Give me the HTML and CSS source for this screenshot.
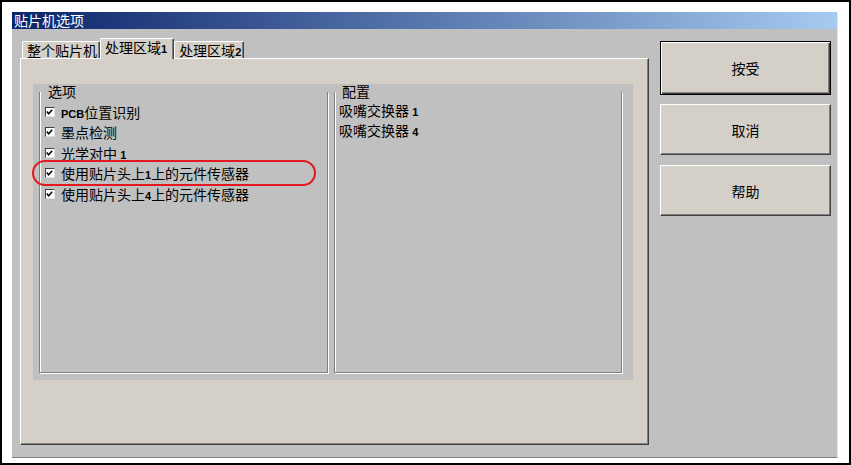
FILE: index.html
```html
<!DOCTYPE html>
<html lang="zh-CN">
<head>
    <meta charset="UTF-8">
    <title>贴片机选项</title>
    <link rel="stylesheet" href="styles.css">
</head>
<body>
    <div class="frame">
        <div class="dialog">
            <div class="titlebar">贴片机选项</div>
            <div class="dialog-body">
                <div class="sheet">
                    <div class="tabs">
                        <div class="tab">整个贴片机</div>
                        <div class="tab active">处理区域<span class="num">1</span></div>
                        <div class="tab">处理区域<span class="num">2</span></div>
                    </div>
                    <div class="page">
                        <div class="inner">
                            <div class="group options">
                                <div class="group-label">选项</div>
                                <div class="check-row">
                                    <span class="box"><svg width="10" height="10" viewBox="0 0 10 10"><polyline points="2,4.5 4,7 8,2.5" fill="none" stroke="#000" stroke-width="1.6"/></svg></span>
                                    <span><span class="num">PCB</span>位置识别</span>
                                </div>
                                <div class="check-row">
                                    <span class="box"><svg width="10" height="10" viewBox="0 0 10 10"><polyline points="2,4.5 4,7 8,2.5" fill="none" stroke="#000" stroke-width="1.6"/></svg></span>
                                    <span>墨点检测</span>
                                </div>
                                <div class="check-row">
                                    <span class="box"><svg width="10" height="10" viewBox="0 0 10 10"><polyline points="2,4.5 4,7 8,2.5" fill="none" stroke="#000" stroke-width="1.6"/></svg></span>
                                    <span>光学对中 <span class="num">1</span></span>
                                </div>
                                <div class="check-row marked">
                                    <span class="box"><svg width="10" height="10" viewBox="0 0 10 10"><polyline points="2,4.5 4,7 8,2.5" fill="none" stroke="#000" stroke-width="1.6"/></svg></span>
                                    <span>使用贴片头上<span class="num">1</span>上的元件传感器</span>
                                    <span class="highlight"></span>
                                </div>
                                <div class="check-row">
                                    <span class="box"><svg width="10" height="10" viewBox="0 0 10 10"><polyline points="2,4.5 4,7 8,2.5" fill="none" stroke="#000" stroke-width="1.6"/></svg></span>
                                    <span>使用贴片头上<span class="num">4</span>上的元件传感器</span>
                                </div>
                            </div>
                            <div class="group config">
                                <div class="group-label">配置</div>
                                <div class="text-row">吸嘴交换器 <span class="num">1</span></div>
                                <div class="text-row">吸嘴交换器 <span class="num">4</span></div>
                            </div>
                        </div>
                    </div>
                </div>
                <div class="buttons">
                    <button class="btn default">按受</button>
                    <button class="btn">取消</button>
                    <button class="btn">帮助</button>
                </div>
            </div>
        </div>
    </div>
</body>
</html>
```

FILE: styles.css
```css
body {
    margin: 0;
    font-family: "Noto Sans CJK SC", "Liberation Sans", sans-serif;
    font-size: 14px;
    color: #000;
}
.frame {
    width: 851px;
    height: 465px;
    box-sizing: border-box;
    border: 2px solid #000;
    background: #fff;
    padding: 10px 0 0 10px;
}
.dialog {
    width: 826px;
    height: 446px;
    box-sizing: border-box;
    background: #c0c0c0;
    border-right: 1px solid #e4e4e4;
    border-bottom: 1px solid #808080;
}
.titlebar {
    height: 17px;
    line-height: 17px;
    padding-left: 2px;
    color: #fff;
    background: linear-gradient(to right, #0a246a, #a6caf0);
}
.dialog-body {
    display: flex;
    padding: 9px 0 0 8px;
}
.num {
    font-family: "Liberation Sans", sans-serif;
    font-weight: bold;
    font-size: 11px;
}

/* tabs */
.sheet {
    width: 629px;
}
.tabs {
    display: flex;
    align-items: flex-end;
    height: 20px;
    padding-left: 2px;
    position: relative;
    z-index: 1;
}
.tab {
    height: 17px;
    line-height: 17px;
    box-sizing: border-box;
    padding: 0 2px 0 4px;
    background: #d4d0c8;
    border-top: 1px solid #fff;
    border-left: 1px solid #fff;
    border-right: 1px solid #404040;
    box-shadow: inset -1px 0 #808080;
    border-radius: 2px 2px 0 0;
    white-space: nowrap;
}
.tab.active {
    height: 21px;
    line-height: 17px;
    margin-bottom: -1px;
    padding: 0 6px 0 4px;
}
.page {
    height: 387px;
    box-sizing: border-box;
    background: #d4d0c8;
    border-top: 1px solid #fff;
    border-left: 1px solid #fff;
    border-right: 1px solid #404040;
    border-bottom: 1px solid #404040;
    box-shadow: inset -1px -1px #808080;
    padding: 25px 0 0 12px;
}
.inner {
    width: 600px;
    height: 296px;
    box-sizing: border-box;
    background: #c0c0c0;
    display: flex;
    gap: 6px;
    padding: 8px 0 0 6px;
}

/* group boxes */
.group {
    height: 281px;
    box-sizing: border-box;
    border: 1px solid #808080;
    border-top: none;
    box-shadow: 1px 1px 0 #fff, inset 1px 0 0 #fff;
}
.options {
    width: 289px;
    padding-left: 5px;
}
.config {
    width: 288px;
    padding-left: 4px;
}
.group-label {
    margin-top: -8px;
    line-height: 14px;
    padding-left: 3px;
}
.check-row {
    display: flex;
    align-items: center;
    gap: 6px;
    height: 20.5px;
    white-space: nowrap;
}
.group-label + .check-row {
    margin-top: 3.5px;
}
.marked {
    position: relative;
}
.box {
    width: 10px;
    height: 10px;
    box-sizing: border-box;
    background: #fff;
    border-top: 1px solid #404040;
    border-left: 1px solid #404040;
    border-right: 1px solid #e0e0e0;
    border-bottom: 1px solid #e0e0e0;
    display: flex;
}
.box svg {
    margin: -1px 0 0 -1px;
}
.highlight {
    position: absolute;
    left: -13px;
    top: -3px;
    width: 284px;
    height: 26px;
    box-sizing: border-box;
    border: 2px solid #e3191f;
    border-radius: 13px;
}
.text-row {
    height: 20px;
    line-height: 20px;
    white-space: nowrap;
}
.group-label + .text-row {
    margin-top: 2px;
}

/* buttons */
.buttons {
    display: flex;
    flex-direction: column;
    margin: 3px 0 0 11px;
}
.btn {
    width: 171px;
    height: 51px;
    margin-bottom: 10px;
    font-family: "Noto Sans CJK SC", sans-serif;
    font-size: 14px;
    color: #000;
    background: #d4d0c8;
    border: 1px solid;
    border-color: #fff #404040 #404040 #fff;
    box-shadow: inset -1px -1px #808080;
    padding: 0;
}
.btn.default {
    height: 54px;
    margin-bottom: 9px;
    border: 1px solid #000;
    box-shadow: inset 1px 1px #fff, inset -1px -1px #404040, inset -2px -2px #808080;
}
```
